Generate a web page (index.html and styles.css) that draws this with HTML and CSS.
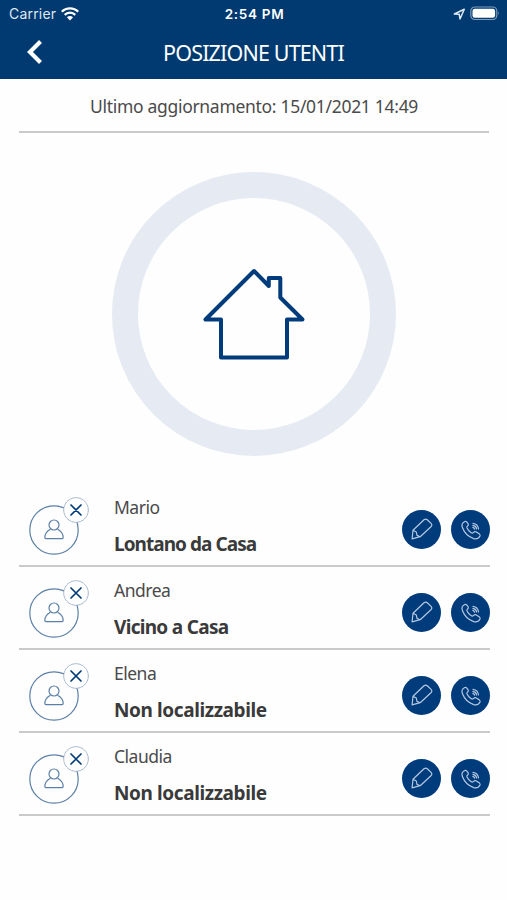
FILE: index.html
```html
<!DOCTYPE html>
<html lang="it">
<head>
    <meta charset="UTF-8">
    <meta name="viewport" content="width=device-width, initial-scale=1.0">
    <title>Posizione utenti</title>
    <link rel="stylesheet" href="styles.css">
</head>
<body>

    <!-- Shared icons -->
    <svg class="icon-defs" width="0" height="0">
        <symbol id="avatar" viewBox="0 0 50 50">
            <circle cx="25" cy="25" r="24.2"/>
            <circle cx="25" cy="20" r="5"/>
            <path d="M21 24.5c-3 1.600-5 4.500-5.200 7.800 0 1 .4 1.400 1.200 1.400h16c.8 0 1.200-.4 1.200-1.400-.2-3.300-2.200-6.200-5.200-7.800"/>
        </symbol>
        <symbol id="pencil" viewBox="0 0 39 39">
            <path d="M11 20.300L22 9.800q1.700-1.500 3.300-.1l4 3.900q1.300 1.400-.1 2.900L18.200 26.700l-8.100 2.200zM11 20.300l3.300 1.700.7 3.400 3.200 1.300"/>
        </symbol>
        <symbol id="phone" viewBox="0 0 39 39">
            <path d="M13.800 11.500c-2.500 1.100-3.400 3.300-2.400 6 2 5.300 6 9.300 11.300 11.100 2.600.8 5-.2 6.300-2.600.3-.8.100-1.400-.5-1.900l-3.600-2.300c-.8-.4-1.500-.3-2 .4-1 1.300-1.700 1.200-3 .3-1.700-1.200-3-2.700-3.900-4.500-.4-.9-.2-1.500.6-2.100.9-.6 1-1.200.6-2l-1.600-2c-.5-.6-1.100-.7-1.800-.4z"/>
            <path d="M21.800 17.300c1 .2 1.600.8 1.800 1.800M21.900 15.300c2 .3 3.400 1.700 3.700 3.700M22 13.400c3 .4 5.100 2.500 5.500 5.500"/>
        </symbol>
        <symbol id="cross" viewBox="0 0 26 26">
            <circle cx="13" cy="13" r="12.300"/>
            <path d="M8 8l10 10M18 8l-10 10"/>
        </symbol>
    </svg>

    <div class="header">
        <div class="status-bar">
            <div class="carrier">
                <span>Carrier</span>
                <svg width="18" height="14" viewBox="0 0 18 14">
                    <path class="wifi-line" d="M.8 4.800a11.500 11.500 0 0 1 16.400 0M3.700 7.900a7.500 7.500 0 0 1 10.600 0"/>
                    <path class="wifi-dot" d="M5.900 10.300a4.600 4.600 0 0 1 6.200 0L9 13.500z"/>
                </svg>
            </div>
            <div class="time">2:54 PM</div>
            <div class="battery">
                <svg width="13" height="12" viewBox="0 0 13 12">
                    <path class="arrow" d="M1.300 6L11.300 1.300 7 11 6.200 6.200z"/>
                </svg>
                <svg width="30" height="15" viewBox="0 0 30 15">
                    <rect class="battery-case" x=".8" y="1" width="26" height="12.500" rx="4"/>
                    <rect class="battery-fill" x="2.500" y="2.700" width="22.600" height="9.100" rx="2.300"/>
                    <path class="battery-tip" d="M28 5.300q1.700 2 0 4z"/>
                </svg>
            </div>
        </div>
        <div class="title-bar">
            <svg class="back" width="18" height="26" viewBox="0 0 18 26">
                <path d="M14.500 2.500L4 13l10.500 10.500"/>
            </svg>
            <h1>POSIZIONE UTENTI</h1>
        </div>
    </div>

    <div class="container">
        <p class="update">Ultimo aggiornamento: 15/01/2021 14:49</p>

        <div class="radar">
            <svg width="102" height="92" viewBox="0 0 102 92">
                <path d="M51 3L2.500 51.500H18V89.500H84V51.500H99.500L77.300 29.500V10H65.800V18z"/>
            </svg>
        </div>

        <ul class="users">
            <li class="user">
                <div class="avatar">
                    <svg class="person"><use href="#avatar"/></svg>
                    <svg class="badge"><use href="#cross"/></svg>
                </div>
                <div class="info">
                    <span class="name">Mario</span>
                    <strong class="position far">Lontano da Casa</strong>
                </div>
                <button class="action"><svg><use href="#pencil"/></svg></button>
                <button class="action"><svg><use href="#phone"/></svg></button>
            </li>
            <li class="user">
                <div class="avatar">
                    <svg class="person"><use href="#avatar"/></svg>
                    <svg class="badge"><use href="#cross"/></svg>
                </div>
                <div class="info">
                    <span class="name">Andrea</span>
                    <strong class="position near">Vicino a Casa</strong>
                </div>
                <button class="action"><svg><use href="#pencil"/></svg></button>
                <button class="action"><svg><use href="#phone"/></svg></button>
            </li>
            <li class="user">
                <div class="avatar">
                    <svg class="person"><use href="#avatar"/></svg>
                    <svg class="badge"><use href="#cross"/></svg>
                </div>
                <div class="info">
                    <span class="name">Elena</span>
                    <strong class="position">Non localizzabile</strong>
                </div>
                <button class="action"><svg><use href="#pencil"/></svg></button>
                <button class="action"><svg><use href="#phone"/></svg></button>
            </li>
            <li class="user">
                <div class="avatar">
                    <svg class="person"><use href="#avatar"/></svg>
                    <svg class="badge"><use href="#cross"/></svg>
                </div>
                <div class="info">
                    <span class="name">Claudia</span>
                    <strong class="position">Non localizzabile</strong>
                </div>
                <button class="action"><svg><use href="#pencil"/></svg></button>
                <button class="action"><svg><use href="#phone"/></svg></button>
            </li>
        </ul>
    </div>

</body>
</html>
```

FILE: styles.css
```css
* {
    box-sizing: border-box;
}
body {
    font-family: "Noto Sans", sans-serif;
    margin: 0;
    background-color: #fefefe;
    color: #4a4a4a;
}
svg {
    display: block;
    fill: none;
    stroke-linecap: round;
    stroke-linejoin: round;
}
.icon-defs {
    position: absolute;
}

/* Header */
.header {
    height: 79px;
    background-color: #003a70;
    color: #fff;
}
.status-bar {
    display: grid;
    grid-template-columns: 1fr auto 1fr;
    align-items: center;
    height: 27px;
    padding: 0 7px 0 9px;
    font-family: Inter, sans-serif;
    font-size: 14px;
}
.carrier {
    display: flex;
    align-items: center;
    gap: 5px;
    color: #dfe8f2;
    letter-spacing: 0.2px;
}
.time {
    font-size: 13.5px;
    font-weight: 600;
    letter-spacing: 0.7px;
}
.battery {
    display: flex;
    align-items: center;
    justify-content: flex-end;
    gap: 4px;
}
.wifi-line {
    stroke: #fff;
    stroke-width: 2.2;
    stroke-linecap: butt;
}
.wifi-dot, .battery-fill {
    fill: #fff;
}
.arrow {
    stroke: #dfe8f2;
    stroke-width: 1.5;
}
.battery-case {
    stroke: #7f9cb8;
    stroke-width: 1.2;
}
.battery-tip {
    fill: #7f9cb8;
}
.title-bar {
    display: grid;
    grid-template-columns: 60px 1fr 60px;
    align-items: center;
    height: 50px;
}
.back {
    margin-left: 26px;
    stroke: #fff;
    stroke-width: 4.2;
    stroke-linecap: butt;
    stroke-linejoin: miter;
}
h1 {
    margin: 0;
    font-size: 21.5px;
    font-weight: 400;
    letter-spacing: -0.85px;
    text-align: center;
    white-space: nowrap;
}

/* Content */
.container {
    padding: 0 18px 0 19px;
}
.update {
    height: 54px;
    margin: 0;
    border-bottom: 2px solid #cacaca;
    font-size: 17.5px;
    line-height: 55px;
    letter-spacing: -0.3px;
    text-align: center;
    white-space: nowrap;
}
.radar {
    display: flex;
    align-items: center;
    justify-content: center;
    width: 284px;
    height: 284px;
    margin: 39px auto 28px;
    border: 26px solid #e5eaf3;
    border-radius: 50%;
}
.radar svg {
    stroke: #003b7c;
    stroke-width: 4;
}

/* User list */
.users {
    margin: 0 -1px 0 0;
    padding: 0;
    list-style: none;
}
.user {
    display: flex;
    align-items: center;
    height: 83px;
    padding: 10px 0 0 10px;
    border-bottom: 2px solid #cacaca;
}
.avatar {
    position: relative;
    width: 50px;
    height: 50px;
    margin-right: 35px;
}
.person {
    width: 50px;
    height: 50px;
    stroke: #5c80a8;
    stroke-width: 1.2;
}
.badge {
    position: absolute;
    top: -8px;
    left: 34px;
    width: 26px;
    height: 26px;
}
#cross circle {
    fill: #fefefe;
    stroke: #8ba2be;
    stroke-width: 0.8;
    stroke-dasharray: 2 1;
}
#cross path {
    stroke: #003b7c;
    stroke-width: 1.7;
}
.info {
    display: flex;
    flex-direction: column;
    flex: 1;
    gap: 9px;
    padding-bottom: 9px;
    white-space: nowrap;
}
.name {
    font-size: 17.5px;
    line-height: 28px;
    letter-spacing: -0.5px;
}
.position {
    color: #3a3a3a;
    font-size: 19px;
    line-height: 28px;
    letter-spacing: -0.4px;
}
.position.far {
    letter-spacing: -0.95px;
}
.position.near {
    letter-spacing: -0.7px;
}
.action {
    width: 39px;
    height: 39px;
    margin-left: 10px;
    padding: 0;
    border: none;
    border-radius: 50%;
    background-color: #003b7c;
    cursor: pointer;
}
.action svg {
    width: 39px;
    height: 39px;
    stroke: #b4c8e0;
    stroke-width: 1.2;
}
```
